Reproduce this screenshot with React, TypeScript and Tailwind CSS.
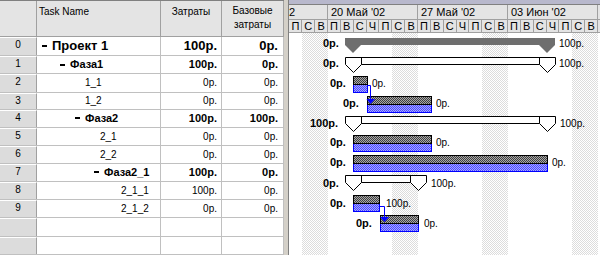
import React from 'react';

type Row = {
  n: string;
  name: string;
  kind: 'proj' | 'sum' | 'task';
  pad: string;
  cost: string;
  base: string;
  h: string;
};

const rows: Row[] = [
  { n: '0', name: 'Проект 1', kind: 'proj', pad: 'pl-[5px]', cost: '100р.', base: '0р.', h: 'h-[19px]' },
  { n: '1', name: 'Фаза1', kind: 'sum', pad: 'pl-[23px]', cost: '100р.', base: '0р.', h: 'h-[20px]' },
  { n: '2', name: '1_1', kind: 'task', pad: 'pl-[48px]', cost: '0р.', base: '0р.', h: 'h-[20px]' },
  { n: '3', name: '1_2', kind: 'task', pad: 'pl-[48px]', cost: '0р.', base: '0р.', h: 'h-[19px]' },
  { n: '4', name: 'Фаза2', kind: 'sum', pad: 'pl-[38px]', cost: '100р.', base: '100р.', h: 'h-[20px]' },
  { n: '5', name: '2_1', kind: 'task', pad: 'pl-[63px]', cost: '0р.', base: '0р.', h: 'h-[20px]' },
  { n: '6', name: '2_2', kind: 'task', pad: 'pl-[63px]', cost: '0р.', base: '0р.', h: 'h-[19px]' },
  { n: '7', name: 'Фаза2_1', kind: 'sum', pad: 'pl-[57px]', cost: '100р.', base: '0р.', h: 'h-[20px]' },
  { n: '8', name: '2_1_1', kind: 'task', pad: 'pl-[84px]', cost: '100р.', base: '0р.', h: 'h-[20px]' },
  { n: '9', name: '2_1_2', kind: 'task', pad: 'pl-[84px]', cost: '0р.', base: '0р.', h: 'h-[20px]' },
  { n: '', name: '', kind: 'task', pad: '', cost: '', base: '', h: 'h-[20px]' },
  { n: '', name: '', kind: 'task', pad: '', cost: '', base: '', h: 'h-[20px]' },
];

const weeks = ["13 Май '02", "20 Май '02", "27 Май '02", "03 Июн '02", "10 Июн '02"];
const days = ['П', 'В', 'С', 'Ч', 'П', 'С', 'В'];

const Minus = () => <span className="inline-block w-[5px] h-[2px] bg-black mr-[5px] align-middle" />;

function TableRow({ r }: { r: Row }) {
  const big = r.kind === 'proj';
  const bold = r.kind !== 'task';
  const txt = big ? 'text-[13px] font-bold' : bold ? 'text-[11px] font-bold' : 'text-[10px]';
  return (
    <div className={`flex ${r.h} border-b border-[#c0c0c0]`}>
      <div className="w-[37px] shrink-0 border-r border-[#a0a0a0] bg-[#dcdcdc] border-t border-t-white text-[10px] text-center leading-[14px]">
        {r.n}
      </div>
      <div className={`w-[124px] shrink-0 border-r border-[#c0c0c0] flex items-center whitespace-nowrap ${r.pad} ${txt}`}>
        {bold && r.name && <Minus />}
        {r.name}
      </div>
      <div className={`w-[61px] shrink-0 border-r border-[#c0c0c0] flex items-center justify-end pr-[4px] ${txt}`}>
        {r.cost}
      </div>
      <div className={`w-[62px] shrink-0 border-r border-[#c0c0c0] flex items-center justify-end pr-[5px] ${txt}`}>
        {r.base}
      </div>
    </div>
  );
}

function Summary({ x1, x2, top, solid }: { x1: number; x2: number; top: number; solid?: boolean }) {
  const b = top + 7;
  const t = top + 15;
  const pts = `${x1},${top} ${x2},${top} ${x2},${b} ${x2 - 8},${t} ${x2 - 16},${b} ${x1 + 16},${b} ${x1 + 8},${t} ${x1},${b}`;
  if (solid) return <polygon points={pts} fill="#6e6e6e" />;
  return (
    <g fill="none" stroke="#000" strokeWidth={1}>
      <polygon points={pts} fill="#fff" />
      <line x1={x1 + 16} y1={top} x2={x1 + 16} y2={b} />
      <line x1={x2 - 16} y1={top} x2={x2 - 16} y2={b} />
    </g>
  );
}

function Task({ x1, x2, y }: { x1: number; x2: number; y: number }) {
  return (
    <g shapeRendering="crispEdges">
      <rect x={x1 + 0.5} y={y + 8.5} width={x2 - x1} height={8} fill="url(#bl)" stroke="#0000ff" />
      <rect x={x1 + 0.5} y={y + 0.5} width={x2 - x1} height={8} fill="url(#gr)" stroke="#000" />
    </g>
  );
}

const B = ({ x, y, t }: { x: number; y: number; t: string }) => (
  <text x={x} y={y} fontSize={11} fontWeight={700} fill="#000">{t}</text>
);
const N = ({ x, y, t }: { x: number; y: number; t: string }) => (
  <text x={x} y={y} fontSize={10} fill="#000">{t}</text>
);

export default function App() {
  return (
    <div className="w-[600px] h-[255px] flex overflow-hidden bg-white text-black" style={{ fontFamily: '"Liberation Sans", Arial, sans-serif' }}>
      <div className="w-[284px] shrink-0 flex flex-col">
        <div className="flex h-[37px] shrink-0 border-b border-[#a0a0a0] border-t border-t-[#808080] bg-[#e4e4e4] text-[10px]">
          <div className="w-[37px] border-r border-[#a0a0a0]" />
          <div className="w-[124px] border-r border-[#a0a0a0] pl-[2px] pt-[3px]">Task Name</div>
          <div className="w-[61px] border-r border-[#a0a0a0] text-center pt-[3px]">Затраты</div>
          <div className="w-[62px] border-r border-[#a0a0a0] text-center pt-[3px] leading-[14px]">
            <div>Базовые</div>
            <div>затраты</div>
          </div>
        </div>
        {rows.map((r, i) => (
          <TableRow key={i} r={r} />
        ))}
      </div>

      <div className="w-[5px] shrink-0 bg-[#d4d0c8] border-r border-[#808080]" />

      <div className="w-[311px] shrink-0 flex flex-col">
        <div className="h-[5px] shrink-0 bg-[#b8b8cc] border-b border-[#808080]" />
        <div className="h-[15px] shrink-0 flex overflow-hidden border-b border-[#a0a0a0] bg-[#e4e4e4] text-[11px] leading-[14px]">
          {weeks.map((w, i) => (
            <div key={w} className={`w-[90px] shrink-0 border-r border-[#a0a0a0] pl-[3px] whitespace-nowrap ${i === 0 ? 'ml-[-51px]' : ''}`}>
              {w}
            </div>
          ))}
        </div>
        <div className="h-[13px] shrink-0 flex overflow-hidden border-b border-[#a0a0a0] bg-[#e4e4e4] text-[11px] leading-[12px]">
          {weeks.map((w, i) => (
            <div key={w} className={`w-[90px] shrink-0 grid grid-cols-7 ${i === 0 ? 'ml-[-51px]' : ''}`}>
              {days.map((d, j) => (
                <div key={j} className="border-r border-[#a0a0a0] text-center">{d}</div>
              ))}
            </div>
          ))}
        </div>
        <svg width={311} height={222} viewBox="289 33 311 222" style={{ fontFamily: '"Liberation Sans", Arial, sans-serif' }}>
          <defs>
            <pattern id="gr" width="2" height="2" patternUnits="userSpaceOnUse">
              <rect width="2" height="2" fill="#a8a8a8" />
              <rect width="1" height="1" fill="#404040" />
              <rect x="1" y="1" width="1" height="1" fill="#404040" />
            </pattern>
            <pattern id="bl" width="2" height="2" patternUnits="userSpaceOnUse">
              <rect width="2" height="2" fill="#a8a8ff" />
              <rect width="1" height="1" fill="#4848ff" />
              <rect x="1" y="1" width="1" height="1" fill="#4848ff" />
            </pattern>
            <pattern id="we" width="2" height="2" patternUnits="userSpaceOnUse">
              <rect width="2" height="2" fill="#ffffff" />
              <rect width="1" height="1" fill="#dcdcdc" />
              <rect x="1" y="1" width="1" height="1" fill="#dcdcdc" />
            </pattern>
          </defs>
          <rect x={289} y={33} width={311} height={222} fill="#fff" />
          {[302, 392, 482, 572].map((x) => (
            <rect key={x} x={x} y={33} width={26} height={222} fill="url(#we)" />
          ))}

          <Summary x1={345} x2={555} top={38} solid />
          <B x={323} y={47} t="0р." />
          <N x={559} y={47} t="100р." />

          <Summary x1={345.5} x2={555.5} top={57.5} />
          <B x={323} y={67} t="0р." />
          <N x={559} y={67} t="100р." />

          <Task x1={353} x2={367} y={76} />
          <B x={330} y={87} t="0р." />
          <N x={372} y={87} t="0р." />

          <Task x1={367} x2={431} y={96} />
          <B x={343} y={107} t="0р." />
          <N x={436} y={107} t="0р." />
          <path d="M367.5 85.5 H370.5 V100" fill="none" stroke="#0000ff" />
          <polygon points="366.5,99 375,99 370.5,104" fill="#0000ff" />

          <Summary x1={345.5} x2={555.5} top={116.5} />
          <B x={310} y={127} t="100р." />
          <N x={560} y={127} t="100р." />

          <Task x1={353} x2={431} y={135} />
          <B x={330} y={146} t="0р." />
          <N x={436} y={146} t="0р." />

          <Task x1={353} x2={547} y={155} />
          <B x={330} y={166} t="0р." />
          <N x={552} y={166} t="0р." />

          <Summary x1={345.5} x2={426.5} top={175.5} />
          <B x={323} y={187} t="0р." />
          <N x={431} y={187} t="100р." />

          <Task x1={353} x2={379} y={195} />
          <B x={330} y={207} t="0р." />
          <N x={386} y={207} t="100р." />

          <Task x1={380} x2={418} y={215} />
          <B x={356} y={227} t="0р." />
          <N x={424} y={227} t="0р." />
          <path d="M379.5 206.5 H384.5 V218" fill="none" stroke="#0000ff" />
          <polygon points="380,217 389,217 384.5,222" fill="#0000ff" />
        </svg>
      </div>
    </div>
  );
}
